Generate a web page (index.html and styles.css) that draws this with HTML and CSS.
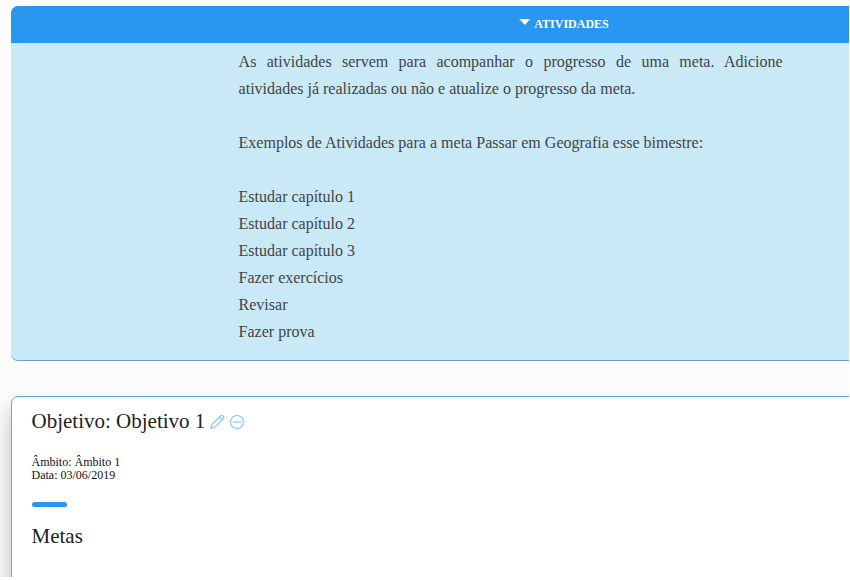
FILE: index.html
```html
<!DOCTYPE html>
<html lang="pt-BR">
<head>
<meta charset="utf-8">
<title>Atividades</title>
<link rel="stylesheet" href="styles.css">
</head>
<body>
<main class="page">
  <section class="activities">
    <h2 class="activities-title"><span class="caret"></span>Atividades</h2>
    <div class="activities-body">
      <p>As atividades servem para acompanhar o progresso de uma meta. Adicione atividades já realizadas ou não e atualize o progresso da meta.</p>
      <p class="examples">Exemplos de Atividades para a meta Passar em Geografia esse bimestre:</p>
      <ul>
        <li>Estudar capítulo 1</li>
        <li>Estudar capítulo 2</li>
        <li>Estudar capítulo 3</li>
        <li>Fazer exercícios</li>
        <li>Revisar</li>
        <li>Fazer prova</li>
      </ul>
    </div>
  </section>
  <section class="goal">
    <h3 class="goal-title">Objetivo: Objetivo 1
      <svg class="icon" viewBox="0 0 16 16"><path d="M1.7 14.5 2.9 10.6 11.6 1.9Q12.7.9 13.8 1.9L14.3 2.4Q15.3 3.5 14.3 4.6L5.6 13.3ZM10.5 3 13.2 5.7"/></svg>
      <svg class="icon" viewBox="0 0 16 16"><circle cx="8" cy="8" r="6.5"/><path d="M4 8H12"/></svg>
    </h3>
    <p class="meta">Âmbito: Âmbito 1<br>Data: 03/06/2019</p>
    <div class="progress"></div>
    <h3 class="goal-title">Metas</h3>
  </section>
</main>
</body>
</html>
```
FILE: styles.css
```css
* { box-sizing: border-box; }
body { margin: 0; background: #fff; font-family: "Liberation Serif", serif; }
h2, h3, p, ul { margin: 0; padding: 0; font-weight: 400; }
li { list-style: none; }
.page {
  width: 849px;
  height: 577px;
  padding: 6px 0 0 11px;
  overflow: hidden;
  background: #fcfcfc;
}
.activities {
  width: 1105px;
  height: 355px;
  border-radius: 7px;
  border-bottom: 1px solid #719fbd;
  background: #c9e9f6;
  overflow: hidden;
}
.activities-title {
  display: flex;
  justify-content: center;
  width: 1106px;
  height: 37px;
  background: #2996f0;
  color: #fff;
  font-size: 12px;
  font-weight: 700;
  line-height: 36px;
  text-transform: uppercase;
}
.caret {
  width: 11px;
  height: 6px;
  margin: 13px 4px 0 0;
  background: #fff;
  clip-path: polygon(0 0, 100% 0, 50% 100%);
}
.activities-body {
  width: 544px;
  margin-left: 227.6px;
  padding-top: 5px;
  color: #444;
  font-size: 16px;
  line-height: 27px;
  text-align: justify;
}
.activities-body p { margin-bottom: 27px; }
.examples { word-spacing: .07px; }
.goal {
  width: 1105px;
  height: 400px;
  margin-top: 35px;
  padding: 12px 19.5px;
  border: 1px solid #4bb5dc;
  border-radius: 7px;
  background: #fff;
  box-shadow: 0 12px 20px rgba(0, 0, 0, .26);
}
.goal-title {
  display: flex;
  align-items: center;
  height: 25px;
  color: #222;
  font-size: 21px;
  line-height: 25px;
}
.icon {
  width: 16px;
  height: 16px;
  margin: 1px 0 0 4px;
  fill: none;
  stroke: #74c7fb;
  stroke-width: 1.1;
}
.icon + .icon { margin-left: 3.8px; }
.meta {
  margin: 22px 0 20px;
  color: #111;
  font-size: 12px;
  line-height: 13px;
}
.progress {
  width: 35px;
  height: 5px;
  margin-bottom: 17px;
  border-radius: 3px;
  background: #2996f0;
}
```
